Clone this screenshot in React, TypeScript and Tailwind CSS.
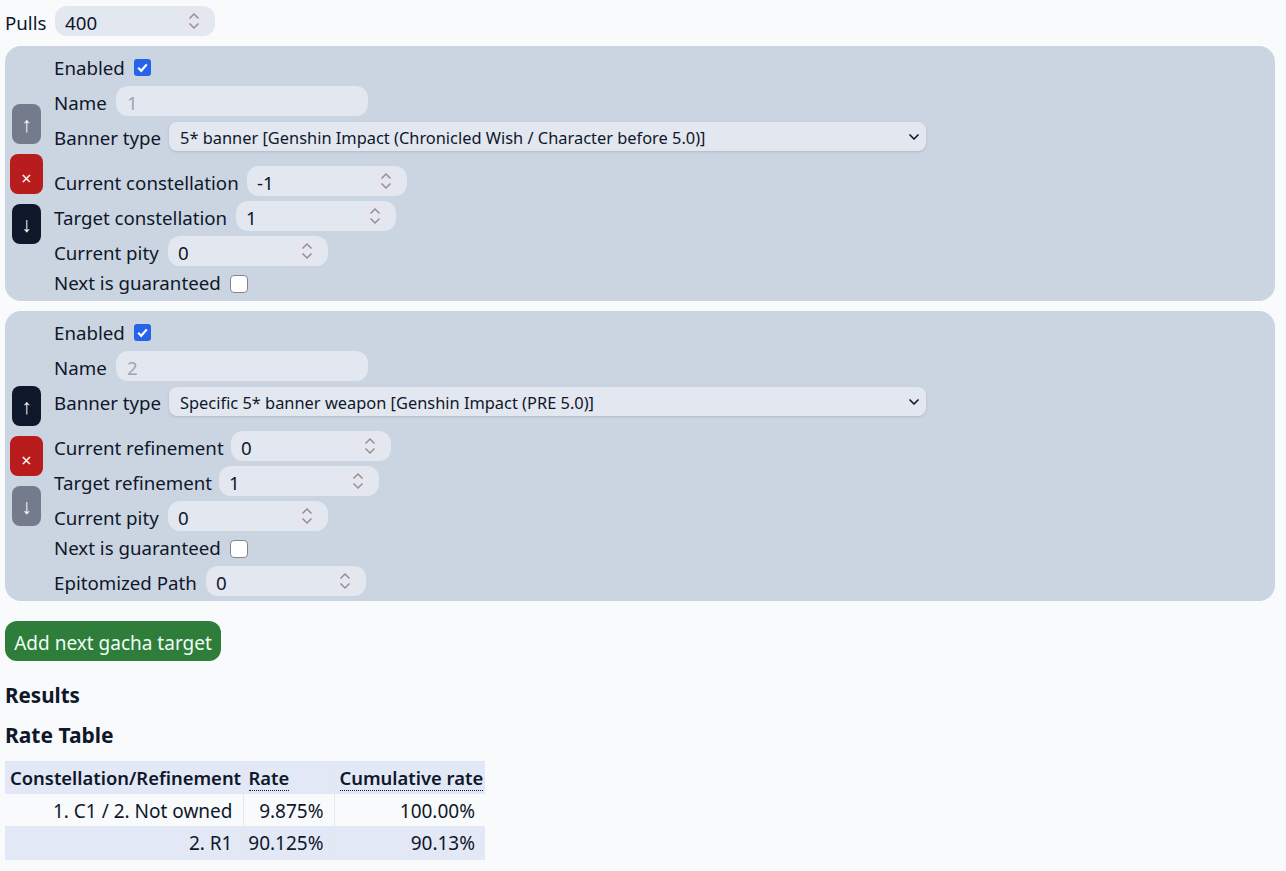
import { ChevronDown } from 'lucide-react';

const font = { fontFamily: '"Noto Sans", sans-serif' };

function Spinner() {
  return (
    <span className="absolute right-[10px] top-[4px] flex h-[22px] w-[23px] items-center justify-center bg-[#e6e7ee]">
      <svg width="12" height="18" viewBox="0 0 12 18" fill="none" stroke="#8f8f9d" strokeWidth="1.5">
        <path d="M1.5 6.5 L6 2 L10.5 6.5" />
        <path d="M1.5 11.5 L6 16 L10.5 11.5" />
      </svg>
    </span>
  );
}

function NumberField({ label, value, labelWidth }: { label: string; value: string; labelWidth: string }) {
  return (
    <div className="flex h-[30px] items-center">
      <span className={`${labelWidth} pt-[4px]`}>{label}</span>
      <div className="relative h-[30px] w-[160px] rounded-xl bg-[#e2e7f0] pl-[10px] leading-[34px]">
        {value}
        <Spinner />
      </div>
    </div>
  );
}

function CheckField({ label, checked, labelWidth }: { label: string; checked: boolean; labelWidth: string }) {
  return (
    <div className="flex h-[25px] items-center">
      <span className={labelWidth}>{label}</span>
      {checked ? (
        <span className="flex h-[17px] w-[17px] items-center justify-center rounded-[3px] bg-[#2563eb]">
          <svg width="13" height="13" viewBox="0 0 13 13" fill="none" stroke="#fff" strokeWidth="2.2">
            <path d="M2.2 6.8 L5.2 9.8 L10.8 3.4" />
          </svg>
        </span>
      ) : (
        <span className="h-[18px] w-[18px] rounded-[4px] border border-[#85858f] bg-white" />
      )}
    </div>
  );
}

function TargetCard({ name, banner, upMuted, downMuted, children }: { name: string; banner: string; upMuted: boolean; downMuted: boolean; children: React.ReactNode }) {
  return (
    <div className="mb-[10px] flex items-center rounded-2xl bg-[#cbd5e1] p-[5px]">
      <div className="mr-[11px] flex w-[33px] flex-col items-center gap-[10px] text-[21px] leading-[40px] text-white">
        <button className={`h-[40px] w-[29px] rounded-lg ${upMuted ? 'bg-[#737b8c]' : 'bg-[#0f172a]'}`}>↑</button>
        <button className="h-[40px] w-[33px] rounded-lg bg-[#b91c1c] pt-[4px] text-[18px]">×</button>
        <button className={`h-[40px] w-[29px] rounded-lg ${downMuted ? 'bg-[#737b8c]' : 'bg-[#0f172a]'}`}>↓</button>
      </div>
      <div className="flex flex-col gap-[5px] pt-[4px]">
        <div className="mb-[1px]">
          <CheckField label="Enabled" checked labelWidth="w-[80px] pt-[2px]" />
        </div>
        <div className="flex h-[30px] items-center">
          <span className="w-[62px] pt-[4px]">Name</span>
          <div className="h-[30px] w-[252px] rounded-xl bg-[#e2e7f0] pl-[11px] leading-[34px] text-[#a0a6b1]">{name}</div>
        </div>
        <div className="mb-[10px] flex h-[30px] items-center">
          <span className="w-[115px] pt-[4px]">Banner type</span>
          <div className="relative h-[29px] w-[757px] rounded-lg bg-[#e2e7f0] pl-[11px] text-[16.4px] leading-[31px] shadow-sm">
            {banner}
            <ChevronDown className="absolute right-[4px] top-[7px] h-[16px] w-[16px]" strokeWidth={2.5} />
          </div>
        </div>
        {children}
      </div>
    </div>
  );
}

export default function App() {
  return (
    <div className="min-h-[871px] bg-[#f8fafc] pl-[5px] pr-[11px] pt-[6px] text-[18.7px] text-[#0f172a]" style={font}>
      <div className="mb-[10px]">
        <NumberField label="Pulls" value="400" labelWidth="w-[50px]" />
      </div>

      <TargetCard name="1" banner="5* banner [Genshin Impact (Chronicled Wish / Character before 5.0)]" upMuted downMuted={false}>
        <NumberField label="Current constellation" value="-1" labelWidth="w-[193px]" />
        <NumberField label="Target constellation" value="1" labelWidth="w-[182px]" />
        <NumberField label="Current pity" value="0" labelWidth="w-[114px]" />
        <CheckField label="Next is guaranteed" checked={false} labelWidth="w-[176px]" />
      </TargetCard>

      <TargetCard name="2" banner="Specific 5* banner weapon [Genshin Impact (PRE 5.0)]" upMuted={false} downMuted>
        <NumberField label="Current refinement" value="0" labelWidth="w-[177px]" />
        <NumberField label="Target refinement" value="1" labelWidth="w-[165px]" />
        <NumberField label="Current pity" value="0" labelWidth="w-[114px]" />
        <CheckField label="Next is guaranteed" checked={false} labelWidth="w-[176px]" />
        <NumberField label="Epitomized Path" value="0" labelWidth="w-[152px]" />
      </TargetCard>

      <button className="mt-[10px] h-[40px] w-[216px] rounded-xl bg-[#2e7d3b] pt-[5px] text-[19px] text-[#f0fdf4]">Add next gacha target</button>

      <h2 className="mt-[19px] h-[30px] text-[20.6px] font-bold leading-[30px]">Results</h2>
      <h2 className="mt-[10px] h-[30px] text-[21px] font-bold leading-[30px]">Rate Table</h2>

      <table className="mt-[11px] w-[480px] table-fixed border-collapse text-[19px]">
        <thead>
          <tr className="h-[33px] bg-[#e2e8f5] text-left text-[18.4px]">
            <th className="w-[238px] border-r border-[#e5e7eb] pl-[5px] font-semibold">Constellation/Refinement</th>
            <th className="w-[91px] border-r border-[#e5e7eb] pl-[5px] font-semibold"><span className="border-b border-dotted border-[#0f172a]">Rate</span></th>
            <th className="pl-[5px] font-semibold"><span className="border-b border-dotted border-[#0f172a]">Cumulative rate</span></th>
          </tr>
        </thead>
        <tbody className="text-right">
          <tr className="h-[32px]">
            <td className="border-r border-[#e5e7eb] pr-[10px] pt-[2px]">1. C1 / 2. Not owned</td>
            <td className="border-r border-[#e5e7eb] pr-[10px] pt-[2px]">9.875%</td>
            <td className="pr-[10px] pt-[2px]">100.00%</td>
          </tr>
          <tr className="h-[34px] bg-[#e2e8f5]">
            <td className="border-r border-[#e5e7eb] pr-[10px]">2. R1</td>
            <td className="border-r border-[#e5e7eb] pr-[10px]">90.125%</td>
            <td className="pr-[10px]">90.13%</td>
          </tr>
        </tbody>
      </table>
    </div>
  );
}
